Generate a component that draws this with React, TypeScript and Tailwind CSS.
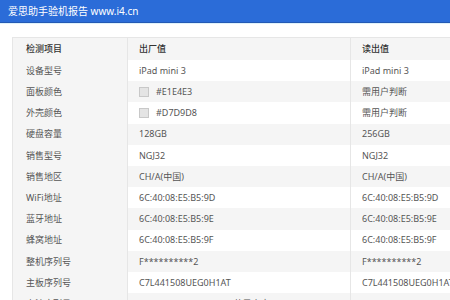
import React from "react";

type Row = { label: string; a: string; b: string; swatch?: boolean };

const rows: Row[] = [
  { label: "设备型号", a: "iPad mini 3", b: "iPad mini 3" },
  { label: "面板颜色", a: "#E1E4E3", b: "需用户判断", swatch: true },
  { label: "外壳颜色", a: "#D7D9D8", b: "需用户判断", swatch: true },
  { label: "硬盘容量", a: "128GB", b: "256GB" },
  { label: "销售型号", a: "NGJ32", b: "NGJ32" },
  { label: "销售地区", a: "CH/A(中国)", b: "CH/A(中国)" },
  { label: "WiFi地址", a: "6C:40:08:E5:B5:9D", b: "6C:40:08:E5:B5:9D" },
  { label: "蓝牙地址", a: "6C:40:08:E5:B5:9E", b: "6C:40:08:E5:B5:9E" },
  { label: "蜂窝地址", a: "6C:40:08:E5:B5:9F", b: "6C:40:08:E5:B5:9F" },
  { label: "整机序列号", a: "F**********2", b: "F**********2" },
  { label: "主板序列号", a: "C7L441508UEG0H1AT", b: "C7L441508UEG0H1AT" },
  { label: "电池序列号", a: "F5D441830Z4FQ3HAE(苹果官方)", b: "F5D441830Z4FQ3HAE" },
];

export default function App() {
  return (
    <div
      className="w-[450px] h-[300px] overflow-hidden bg-white text-[#555]"
      style={{ fontFamily: '"Noto Sans", "Noto Sans CJK SC", sans-serif' }}
    >
      <div className="h-[22px] bg-[#2b6cd8] flex items-center pl-[8px] text-white text-[10px] leading-none">
        爱思助手验机报告 www.i4.cn
      </div>
      <div className="h-[1px] bg-[#2459b4]" />
      <div className="h-[1px] bg-[#dff2fb]" />
      <div className="h-[13px]" />
      <div className="ml-[12px] w-[470px] border-t border-l border-[#e6e6e6]">
        <div className="flex h-[22px] items-center bg-[#f5f5f5] text-[9px] text-[#333] font-medium">
          <div className="w-[115px] pl-[13px] border-r border-[#e6e6e6] h-full flex items-center">检测项目</div>
          <div className="w-[223px] pl-[11px] border-r border-[#e6e6e6] h-full flex items-center">出厂值</div>
          <div className="flex-1 pl-[11px] h-full flex items-center">读出值</div>
        </div>
        {rows.map((r, i) => (
          <div
            key={r.label}
            className={`flex h-[21.2px] items-center text-[9px] ${i % 2 === 0 ? "bg-white" : "bg-[#f5f5f5]"}`}
          >
            <div className="w-[115px] pl-[13px] border-r border-[#e6e6e6] h-full flex items-center bg-[#f5f5f5]">
              {r.label}
            </div>
            <div className="w-[223px] pl-[11px] border-r border-[#e6e6e6] h-full flex items-center">
              {r.swatch && (
                <span className="inline-block w-[10px] h-[10px] border border-[#c8c8c8] bg-[#e4e4e4] mr-[7px]" />
              )}
              {r.a}
            </div>
            <div className="flex-1 pl-[11px] h-full flex items-center">{r.b}</div>
          </div>
        ))}
      </div>
    </div>
  );
}
